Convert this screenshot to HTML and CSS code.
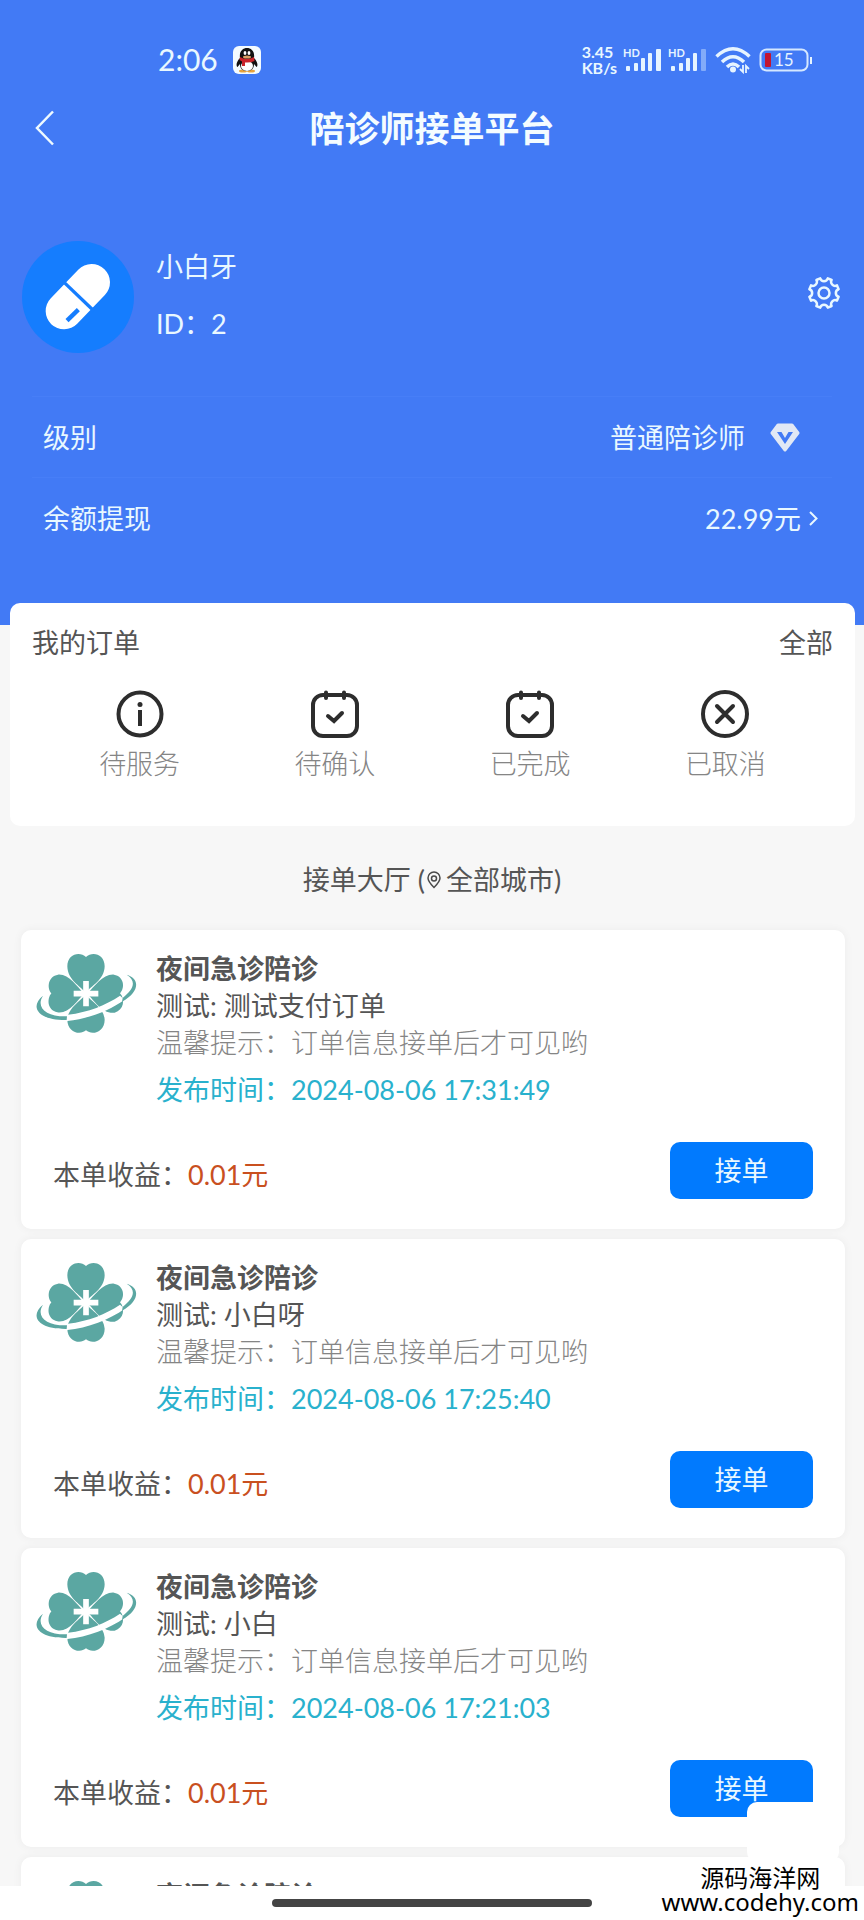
FILE: index.html
```html
<!DOCTYPE html>
<html lang="zh-CN">
<head>
<meta charset="utf-8">
<meta name="viewport" content="width=device-width, initial-scale=1">
<title>陪诊师接单平台</title>
<link rel="stylesheet" href="styles.css">
</head>
<body>
<svg class="defs" aria-hidden="true">
  <symbol id="clover" viewBox="105 95 306 246">
    <g fill="#5ba7a2">
      <path d="M257 218 C240 195 203 180 202 138 C202 100 240 92 258 110 C276 92 314 100 314 138 C313 180 274 195 257 218Z"/>
      <path d="M252 220 C232 240 206 282 172 276 C142 270 140 236 154 219 C140 202 144 168 174 163 C206 160 232 200 252 220Z"/>
      <path d="M262 220 C282 200 310 160 342 163 C372 168 376 202 360 219 C376 236 372 270 344 277 C308 282 282 240 262 220Z"/>
      <path d="M257 222 C240 245 204 262 202 298 C202 336 240 346 258 330 C276 346 314 336 314 298 C312 262 274 245 257 222Z"/>
    </g>
    <path d="M136 250 C150 276 180 284 204 283 C265 276 318 254 360 226 L374 238 C330 270 262 296 202 302 C160 300 134 280 136 250Z" fill="#fff"/>
    <path d="M129 226 C92 254 104 300 200 299 L201 288 C140 290 106 262 129 226Z" fill="#5ba7a2"/>
    <path d="M380 163 C420 174 420 214 366 244 L368 233 C402 206 410 182 380 163Z" fill="#5ba7a2"/>
    <path d="M258 182V258M221 220H295" stroke="#fff" stroke-width="17" fill="none"/>
  </symbol>
  <symbol id="calendar" viewBox="0 0 48 48">
    <g fill="none" stroke="#2d2d2d" stroke-width="4" stroke-linecap="round">
      <rect x="2" y="5" width="44" height="41" rx="10"/>
      <path d="M15 2.500V8M33 2.500V8M17 26l6 5 8-8"/>
    </g>
  </symbol>
</svg>
<div class="app">
  <main class="content">
    <header class="hero">
      <div class="status">
        <div class="status-side">
          <span class="clock">2:06</span>
          <svg class="qq" viewBox="0 0 28 28" aria-hidden="true">
            <rect width="28" height="28" rx="6" fill="#f4fbff"/>
            <ellipse cx="10" cy="25" rx="4" ry="1.500" fill="#e8a33c"/><ellipse cx="18" cy="25" rx="4" ry="1.500" fill="#e8a33c"/>
            <path d="M7 12C3 16 3 20 4.500 21L7 18C7 23 10 25 14 25S21 23 21 18L23.500 21C25 20 25 16 21 12C22 5 18 2 14 2S6 5 7 12Z" fill="#111"/>
            <ellipse cx="14" cy="20" rx="6" ry="5" fill="#fff"/>
            <path d="M7 11Q14 15 21 11L21.500 15Q17 17 12 16.500V20H9V15.500L6.500 14Z" fill="#c9242b"/>
            <ellipse cx="12" cy="7" rx="1.400" ry="2" fill="#fff"/><ellipse cx="16" cy="7" rx="1.400" ry="2" fill="#fff"/>
            <ellipse cx="14" cy="11" rx="4" ry="1.500" fill="#d9a066"/>
          </svg>
        </div>
        <div class="status-side">
          <span class="speed">3.45<br>KB/s</span>
          <svg class="signal" viewBox="0 0 39 26" aria-hidden="true"><text x="0" y="10">HD</text><g fill="#e6f4ff"><rect x="3" y="19" width="4" height="5" rx="1"/><rect x="11" y="16" width="4" height="8" rx="1"/><rect x="18" y="11" width="4" height="13" rx="1"/><rect x="25" y="6" width="4" height="18" rx="1"/><rect x="33" y="2" width="5" height="22" rx="1"/></g></svg>
          <svg class="signal" viewBox="0 0 39 26" aria-hidden="true"><text x="0" y="10">HD</text><g fill="#e6f4ff"><rect x="3" y="19" width="4" height="5" rx="1"/><rect x="11" y="16" width="4" height="8" rx="1"/><rect x="18" y="11" width="4" height="13" rx="1"/><rect x="25" y="6" width="4" height="18" rx="1"/><rect x="33" y="2" width="5" height="22" rx="1" opacity=".4"/></g></svg>
          <svg class="wifi" viewBox="0 0 36 28" aria-hidden="true"><g fill="none" stroke="#e6f4ff" stroke-width="3.500"><path d="M1.500 10.500Q18-5 34.500 10.500"/><path d="M7 16Q18 5.500 29 16"/><path d="M12 21Q18 15 24 21"/></g><circle cx="18" cy="23.500" r="3" fill="#e6f4ff"/><path d="M28 19v7l-3-3M31 27v-7l3 3" fill="none" stroke="#e6f4ff" stroke-width="1.800"/></svg>
          <svg class="battery" viewBox="0 0 54 24" aria-hidden="true"><rect x="1.500" y="1.500" width="47" height="21" rx="6" fill="none" stroke="#d5e8ff" stroke-width="2"/><rect x="6" y="5" width="6" height="14" rx="1" fill="#c3152f"/><rect x="51" y="9" width="2" height="7" fill="#e6f4ff"/><text x="15" y="18">15</text></svg>
        </div>
      </div>
      <nav class="titlebar">
        <button class="icon-button" aria-label="返回"><svg width="20" height="36" viewBox="0 0 20 36"><path d="M18 1.500L2 18L18 34.500" fill="none" stroke="#eefaff" stroke-width="2.500"/></svg></button>
        <h1>陪诊师接单平台</h1>
      </nav>
      <section class="profile">
        <svg class="avatar" viewBox="66 62 336 336" role="img" aria-label="头像">
          <circle cx="234" cy="230" r="168" fill="#157dfe"/>
          <path d="M192 272L275 186" stroke="#fff" stroke-width="110" stroke-linecap="round"/>
          <path d="M190 184L282 272" stroke="#157dfe" stroke-width="10"/>
          <path d="M201 301L235 268" stroke="#157dfe" stroke-width="13"/>
        </svg>
        <div class="who"><span>小白牙</span><span>ID：2</span></div>
        <button class="icon-button settings" aria-label="设置"><svg width="32" height="32" viewBox="0 0 32 32" fill="none" stroke="#e9f8ff" stroke-width="2.500" stroke-linejoin="round"><path d="M12.200 1.400A4 4 0 0 0 19.800 1.400L23.600 3A4 4 0 0 0 29 8.400L30.600 12.200A4 4 0 0 0 30.600 19.800L29 23.600A4 4 0 0 0 23.600 29L19.800 30.600A4 4 0 0 0 12.200 30.600L8.400 29A4 4 0 0 0 3 23.600L1.400 19.800A4 4 0 0 0 1.400 12.200L3 8.400A4 4 0 0 0 8.400 3Z"/><circle cx="16" cy="16" r="5.500"/></svg></button>
      </section>
      <div class="facts">
        <div class="fact">
          <span>级别</span>
          <span class="level">普通陪诊师<svg width="30" height="30" viewBox="0 0 30 30" aria-hidden="true"><path d="M8 3H22L28 11L15 28L2 11Z" fill="#e1e8f5" stroke="#e1e8f5" stroke-width="3" stroke-linejoin="round"/><path d="M7 10H11.500L15 16L18.500 10H23L15 22Z" fill="#427af5"/></svg></span>
        </div>
        <a class="fact" href="#withdraw">
          <span>余额提现</span>
          <span class="balance">22.99元<svg width="9" height="15" viewBox="0 0 9 15" aria-hidden="true"><path d="M1 1L7.500 7.500L1 14" fill="none" stroke="#e9f8ff" stroke-width="2"/></svg></span>
        </a>
      </div>
    </header>

    <section class="orders">
      <div class="orders-head"><h2>我的订单</h2><a href="#all">全部</a></div>
      <div class="tabs">
        <a href="#waiting"><svg viewBox="0 0 48 48" aria-hidden="true"><circle cx="24" cy="24" r="21.500" fill="none" stroke="#2d2d2d" stroke-width="4"/><circle cx="24" cy="14.500" r="2.500" fill="#2d2d2d"/><path d="M24 20V36" stroke="#2d2d2d" stroke-width="4"/></svg>待服务</a>
        <a href="#confirm"><svg aria-hidden="true"><use href="#calendar"/></svg>待确认</a>
        <a href="#done"><svg aria-hidden="true"><use href="#calendar"/></svg>已完成</a>
        <a href="#cancelled"><svg viewBox="0 0 48 48" aria-hidden="true"><circle cx="24" cy="24" r="22" fill="none" stroke="#2d2d2d" stroke-width="4"/><path d="M16 16L32 32M32 16L16 32" stroke="#2d2d2d" stroke-width="4" stroke-linecap="round"/></svg>已取消</a>
      </div>
    </section>

    <h2 class="hall">接单大厅 (<svg width="14" height="18" viewBox="0 0 14 18" aria-hidden="true"><path d="M7 16.500C4 13.500 1 10.500 1 7A6 6 0 0 1 13 7C13 10.500 10 13.500 7 16.500Z" fill="none" stroke="#4a4a4a" stroke-width="1.500"/><circle cx="7" cy="7.500" r="2.500" fill="none" stroke="#4a4a4a" stroke-width="1.500"/></svg><a href="#city">全部城市</a>)</h2>

    <section class="list">
      <article class="job">
        <div class="job-body">
          <svg class="job-logo" aria-hidden="true"><use href="#clover"/></svg>
          <div>
            <h3>夜间急诊陪诊</h3>
            <p>测试: 测试支付订单</p>
            <p class="hint">温馨提示：订单信息接单后才可见哟</p>
            <p class="time">发布时间：2024-08-06 17:31:49</p>
          </div>
        </div>
        <div class="job-foot"><p>本单收益：<span class="price">0.01元</span></p><button class="accept">接单</button></div>
      </article>
      <article class="job">
        <div class="job-body">
          <svg class="job-logo" aria-hidden="true"><use href="#clover"/></svg>
          <div>
            <h3>夜间急诊陪诊</h3>
            <p>测试: 小白呀</p>
            <p class="hint">温馨提示：订单信息接单后才可见哟</p>
            <p class="time">发布时间：2024-08-06 17:25:40</p>
          </div>
        </div>
        <div class="job-foot"><p>本单收益：<span class="price">0.01元</span></p><button class="accept">接单</button></div>
      </article>
      <article class="job">
        <div class="job-body">
          <svg class="job-logo" aria-hidden="true"><use href="#clover"/></svg>
          <div>
            <h3>夜间急诊陪诊</h3>
            <p>测试: 小白</p>
            <p class="hint">温馨提示：订单信息接单后才可见哟</p>
            <p class="time">发布时间：2024-08-06 17:21:03</p>
          </div>
        </div>
        <div class="job-foot"><p>本单收益：<span class="price">0.01元</span></p><button class="accept">接单</button></div>
      </article>
      <article class="job">
        <div class="job-body">
          <svg class="job-logo" aria-hidden="true"><use href="#clover"/></svg>
          <div><h3>夜间急诊陪诊</h3></div>
        </div>
      </article>
    </section>
  </main>
  <footer class="home"><span class="home-bar"></span></footer>
  <aside class="watermark">
    <span class="mark-name">源码海洋网</span>
    <span class="mark-url">www.codehy.com</span>
  </aside>
</div>
</body>
</html>
```

FILE: styles.css
```css
* { box-sizing: border-box; }
body, h1, h2, h3, p { margin: 0; }
body {
  font-family: Lato, "Noto Sans CJK SC", sans-serif;
  font-size: 27px;
  line-height: 37px;
  color: #555;
  background: #f7f7f7;
}
a { color: inherit; text-decoration: none; }
h2 { font-size: 27px; font-weight: 400; }
button { font: inherit; border: 0; padding: 0; cursor: pointer; }
svg { display: block; flex: none; }
.defs { position: absolute; width: 0; height: 0; }

.app { position: relative; display: flex; flex-direction: column; height: 100vh; overflow: hidden; }
.content { flex: 1; min-height: 0; overflow-y: auto; scrollbar-width: none; }

.hero { background: #427af5; color: #e9f8ff; padding-bottom: 67px; }
.status { display: flex; justify-content: space-between; align-items: center; padding: 38px 51px 16px 158px; }
.status-side { display: flex; align-items: center; gap: 6px; height: 43px; }
.clock { font-size: 30px; margin-right: 9px; }
.qq { width: 28px; height: 28px; }
.speed { font-size: 16px; line-height: 16px; font-weight: 700; }
.signal { width: 39px; height: 26px; overflow: visible; }
.signal text { font-size: 11px; line-height: 12px; font-weight: 700; fill: #e6f4ff; }
.wifi { width: 36px; height: 28px; margin: 0 2px; }
.battery { width: 54px; height: 24px; }
.battery text { font-size: 17px; fill: #e6f4ff; }

.titlebar { display: grid; grid-template-columns: 64px 1fr 64px; align-items: center; height: 62px; }
.titlebar .icon-button { justify-self: center; padding-left: 26px; }
.titlebar h1 { font-size: 35px; line-height: 48px; text-align: center; color: #f4fcff; }
.icon-button { background: none; }

.profile { display: flex; align-items: center; padding: 82px 24px 0 22px; }
.avatar { width: 112px; height: 112px; }
.who { flex: 1; display: flex; flex-direction: column; gap: 20px; padding: 0 0 4px 22px; }
.settings { padding-bottom: 8px; }
.facts { margin: 43px 32px 0; }
.fact { display: flex; justify-content: space-between; align-items: center; height: 81px; padding: 0 14px 0 11px; border-top: 1px solid #477ef7; }
.level { display: flex; align-items: center; gap: 25px; padding-right: 18px; }
.balance { display: flex; align-items: center; gap: 8px; }

.orders { position: relative; margin: -22px 9px 0 10px; padding: 21px 22px 44px; background: #fff; border-radius: 10px; }
.orders-head { display: flex; justify-content: space-between; }
.tabs { display: grid; grid-template-columns: repeat(4, 1fr); margin-top: 29px; padding: 0 10px; }
.tabs a { display: flex; flex-direction: column; align-items: center; gap: 7px; color: #858585; font-weight: 300; }
.tabs svg { width: 48px; height: 48px; }

.hall { display: flex; justify-content: center; align-items: center; margin: 35px 0 32px; white-space: pre; }
.hall svg { margin: 0 5px 0 2px; }

.list { display: flex; flex-direction: column; gap: 10px; padding: 0 19px 0 21px; }
.job { background: #fff; border-radius: 10px; padding: 20px 32px 30px 14px; box-shadow: 0 0 10px rgba(0, 0, 0, .05); }
.job-body { display: flex; gap: 19px; }
.job-logo { width: 102px; height: 82px; margin-top: 2px; }
.job h3 { font-size: 27px; }
.hint { color: #858585; font-weight: 300; }
.time { margin-top: 10px; color: #29b1cd; }
.job-foot { display: flex; justify-content: space-between; align-items: flex-end; margin-top: 34px; padding-left: 18px; }
.job-foot p { line-height: 49px; }
.price { color: #c9501f; }
.accept { width: 143px; height: 57px; border-radius: 10px; background: #017afe; color: #e9f8ff; }

.home { display: flex; justify-content: center; align-items: center; height: 34px; background: #fff; }
.home-bar { width: 37%; height: 8px; border-radius: 4px; background: #444; }

.watermark {
  position: absolute; z-index: 1; right: 5px; bottom: 0;
  display: flex; flex-direction: column; align-items: center;
  padding: 64px 0 6px;
  color: #000; font-family: "Noto Sans", "Noto Sans CJK SC", sans-serif;
  white-space: nowrap;
}
.watermark::before {
  content: ""; position: absolute; z-index: -1; top: 0; right: 20px;
  width: 92px; height: 60px;
  background: #fff; border-radius: 10px 0 10px 10px;
}
.mark-name { font-size: 24px; line-height: 24px; }
.mark-url { font-size: 24px; line-height: 24px; }
```
